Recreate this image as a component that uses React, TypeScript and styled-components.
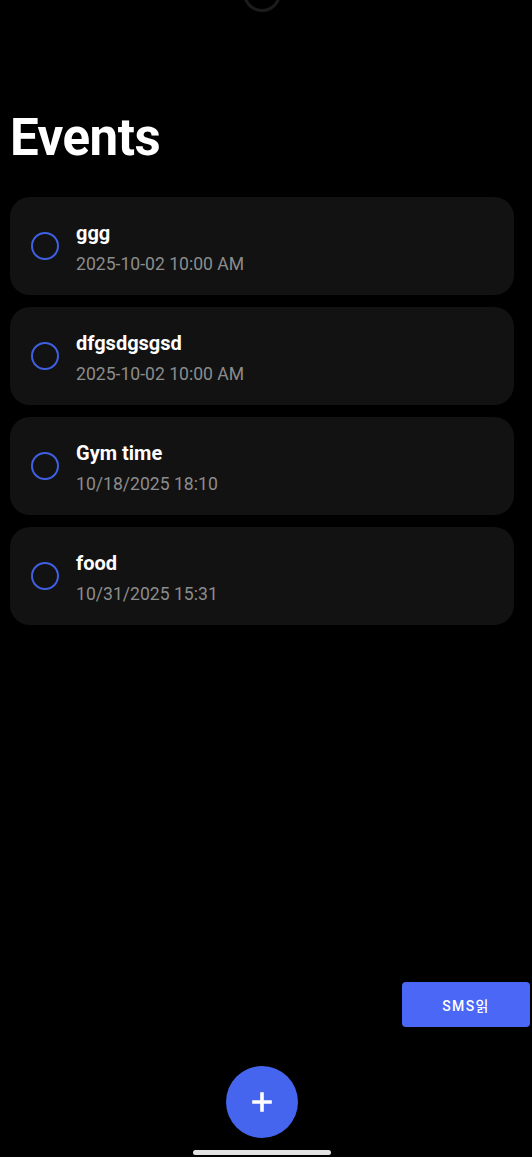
import { createGlobalStyle, styled } from 'styled-components'

const GlobalStyle = createGlobalStyle`
  html, body {
    margin: 0;
    padding: 0;
    background: #000000;
  }
  body {
    font-family: Roboto, 'Noto Sans', 'Noto Sans CJK KR', sans-serif;
    color: #ffffff;
  }
  * {
    box-sizing: border-box;
  }
`

const events = [
  { title: 'ggg', date: '2025-10-02 10:00 AM' },
  { title: 'dfgsdgsgsd', date: '2025-10-02 10:00 AM' },
  { title: 'Gym time', date: '10/18/2025 18:10' },
  { title: 'food', date: '10/31/2025 15:31' },
]

const App = () => {
  return (
    <Screen>
      <GlobalStyle />
      <CameraRing />
      <Title>Events</Title>
      <EventList>
        {events.map((ev) => (
          <EventCard key={ev.title}>
            <CheckCircle />
            <EventText>
              <EventTitle>{ev.title}</EventTitle>
              <EventDate>{ev.date}</EventDate>
            </EventText>
          </EventCard>
        ))}
      </EventList>
      <Spacer />
      <SmsRow>
        <SmsButton>SMS읽</SmsButton>
      </SmsRow>
      <FabRow>
        <Fab aria-label="add">
          <svg width="20" height="20" viewBox="0 0 20 20">
            <path d="M10 2v16M2 10h16" stroke="#ffffff" strokeWidth="3.6" strokeLinecap="square" />
          </svg>
        </Fab>
      </FabRow>
      <HomeBar />
    </Screen>
  )
}

export default App

const Screen = styled.div`
  position: relative;
  display: flex;
  flex-direction: column;
  width: 532px;
  height: 1157px;
  padding: 108px 0 2px 0;
  overflow: hidden;
  background: #000000;
`

const CameraRing = styled.div`
  position: absolute;
  left: 243px;
  top: -26px;
  width: 38px;
  height: 38px;
  border-radius: 50%;
  border: 3px solid #1c1c1c;
`

const Title = styled.h1`
  margin: 0 0 29px 10px;
  font-family: Roboto, sans-serif;
  font-weight: 700;
  font-size: 51px;
  line-height: 60px;
  letter-spacing: -0.5px;
  color: #ffffff;
`

const EventList = styled.div`
  display: flex;
  flex-direction: column;
  gap: 12px;
  padding: 0 18px 0 10px;
`

const EventCard = styled.div`
  display: flex;
  align-items: center;
  height: 98px;
  padding: 0 0 0 21px;
  gap: 17px;
  border-radius: 20px;
  background: #121212;
`

const CheckCircle = styled.div`
  flex: none;
  width: 28px;
  height: 28px;
  border-radius: 50%;
  border: 2.5px solid #3f60e3;
`

const EventText = styled.div`
  display: flex;
  flex-direction: column;
  gap: 8px;
  margin-top: 3px;
`

const EventTitle = styled.div`
  font-family: Roboto, sans-serif;
  font-weight: 700;
  font-size: 20px;
  line-height: 24px;
  color: #ffffff;
`

const EventDate = styled.div`
  font-family: Roboto, sans-serif;
  font-weight: 400;
  font-size: 17.6px;
  line-height: 22px;
  color: #8c8c8c;
`

const Spacer = styled.div`
  flex: 1;
`

const SmsRow = styled.div`
  display: flex;
  justify-content: flex-end;
  padding-right: 2px;
`

const SmsButton = styled.button`
  width: 128px;
  height: 45px;
  border: none;
  border-radius: 4px;
  background: #4a67f5;
  color: #ffffff;
  font-family: Roboto, 'Noto Sans CJK KR', sans-serif;
  font-weight: 500;
  font-size: 14px;
  letter-spacing: 1.4px;
`

const FabRow = styled.div`
  display: flex;
  justify-content: center;
  margin-top: 39px;
  padding-right: 8px;
`

const Fab = styled.button`
  display: flex;
  align-items: center;
  justify-content: center;
  width: 72px;
  height: 72px;
  padding: 0;
  border: none;
  border-radius: 50%;
  background: #4565ef;
`

const HomeBar = styled.div`
  align-self: center;
  width: 138px;
  height: 5px;
  margin: 12px 8px 0 0;
  border-radius: 3px;
  background: #e2e2e2;
`
